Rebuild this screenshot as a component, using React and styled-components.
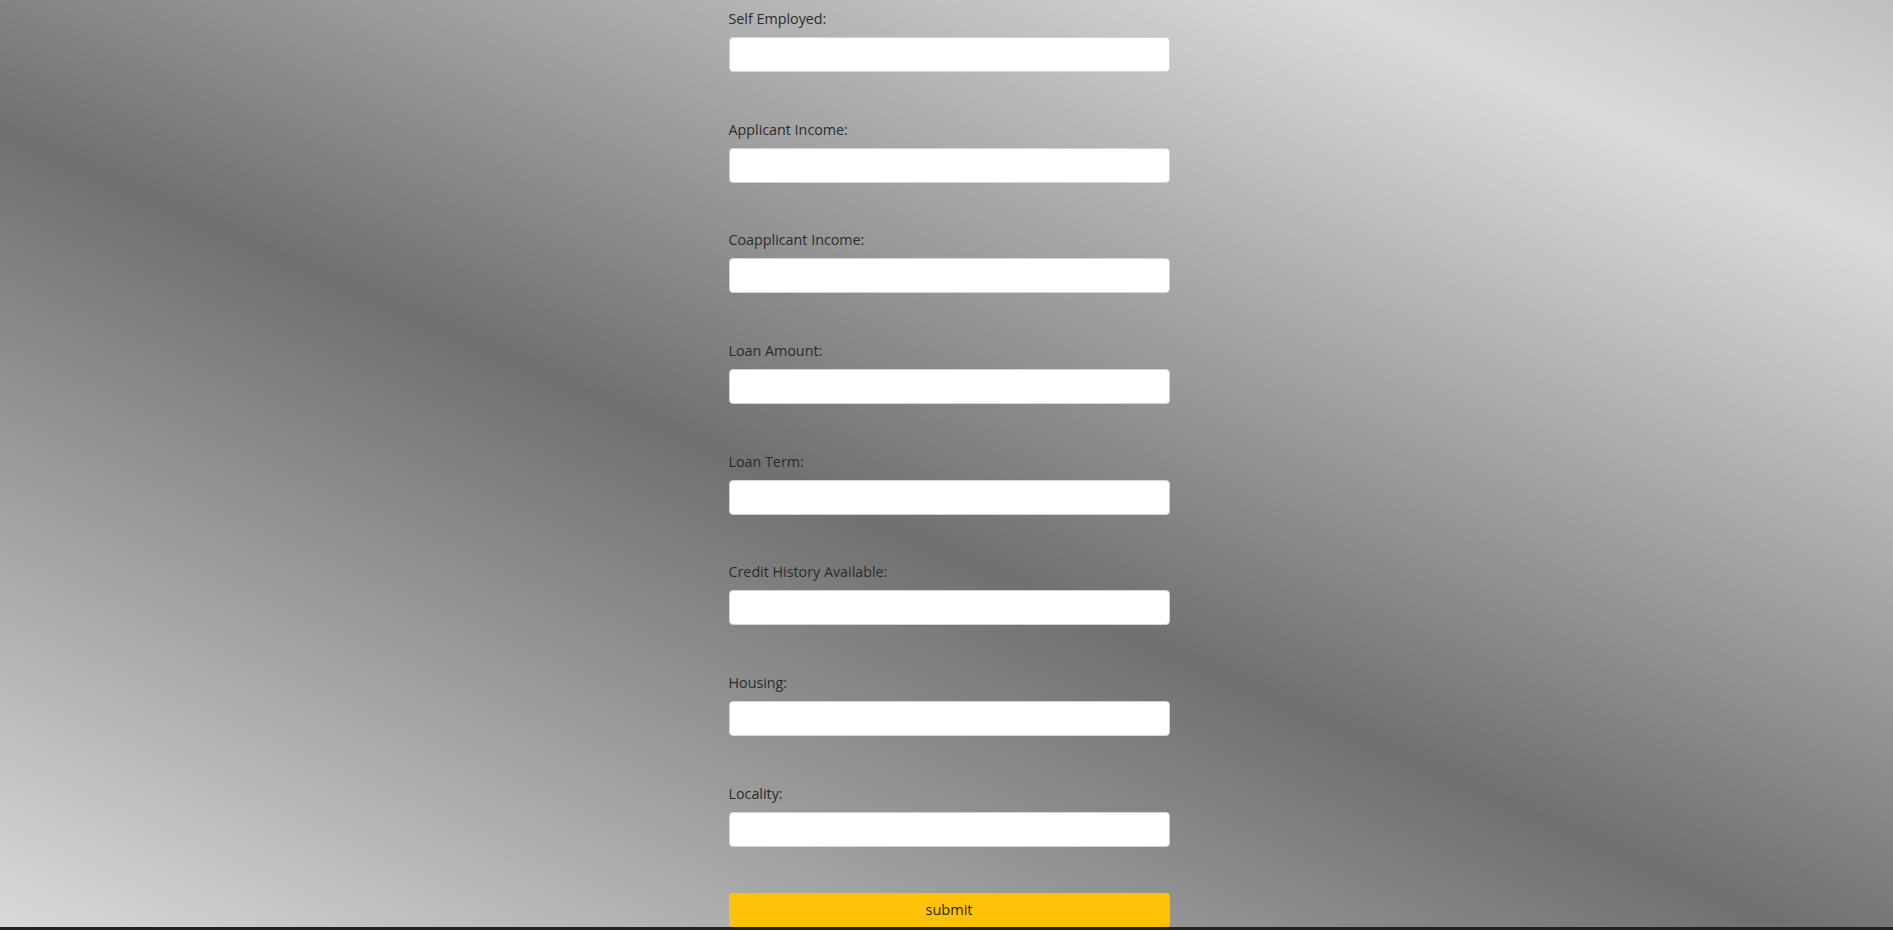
import React from 'react'
import styled, { createGlobalStyle } from 'styled-components'

const fields = [
  'Self Employed:',
  'Applicant Income:',
  'Coapplicant Income:',
  'Loan Amount:',
  'Loan Term:',
  'Credit History Available:',
  'Housing:',
  'Locality:',
]

export default function App() {
  return (
    <>
      <GlobalStyle />
      <Page>
        <Form onSubmit={(e) => e.preventDefault()}>
          {fields.map((label) => (
            <Field key={label}>
              <Label>{label}</Label>
              <Input type='text' />
            </Field>
          ))}
          <SubmitButton type='submit'>submit</SubmitButton>
        </Form>
      </Page>
      <Footer />
    </>
  )
}

const GlobalStyle = createGlobalStyle`
  html, body {
    margin: 0;
    padding: 0;
    background: #222222;
    overflow: hidden;
  }
  * {
    box-sizing: border-box;
  }
`

const Page = styled.div`
  width: 100%;
  height: 927px;
  display: flex;
  justify-content: center;
  padding-top: 8px;
  background: linear-gradient(24deg, #d9d9d9 0%, #707070 45%, #dadada 86%, #bfbfbf 100%);
  font-family: "Open Sans", "Noto Sans", sans-serif;
`

const Form = styled.form`
  width: 446px;
  padding-left: 5px;
  display: flex;
  flex-direction: column;
`

const Field = styled.div`
  display: flex;
  flex-direction: column;
  margin-bottom: 46.7px;
`

const Label = styled.label`
  display: block;
  height: 21px;
  line-height: 21px;
  margin-bottom: 8px;
  font-size: 14.3px;
  color: #2b2b2b;
`

const Input = styled.input`
  width: 441px;
  height: 35px;
  border: 1px solid #ced4da;
  border-radius: 4px;
  background: #ffffff;
  padding: 0 12px;
  font-size: 14px;
  outline: none;
`

const SubmitButton = styled.button`
  width: 441px;
  height: 34px;
  margin-top: -1px;
  border: none;
  border-radius: 4px;
  background: #ffc107;
  color: #212529;
  font-family: "Open Sans", "Noto Sans", sans-serif;
  font-size: 14.5px;
  cursor: pointer;
`

const Footer = styled.div`
  height: 60px;
  background: #222222;
`
